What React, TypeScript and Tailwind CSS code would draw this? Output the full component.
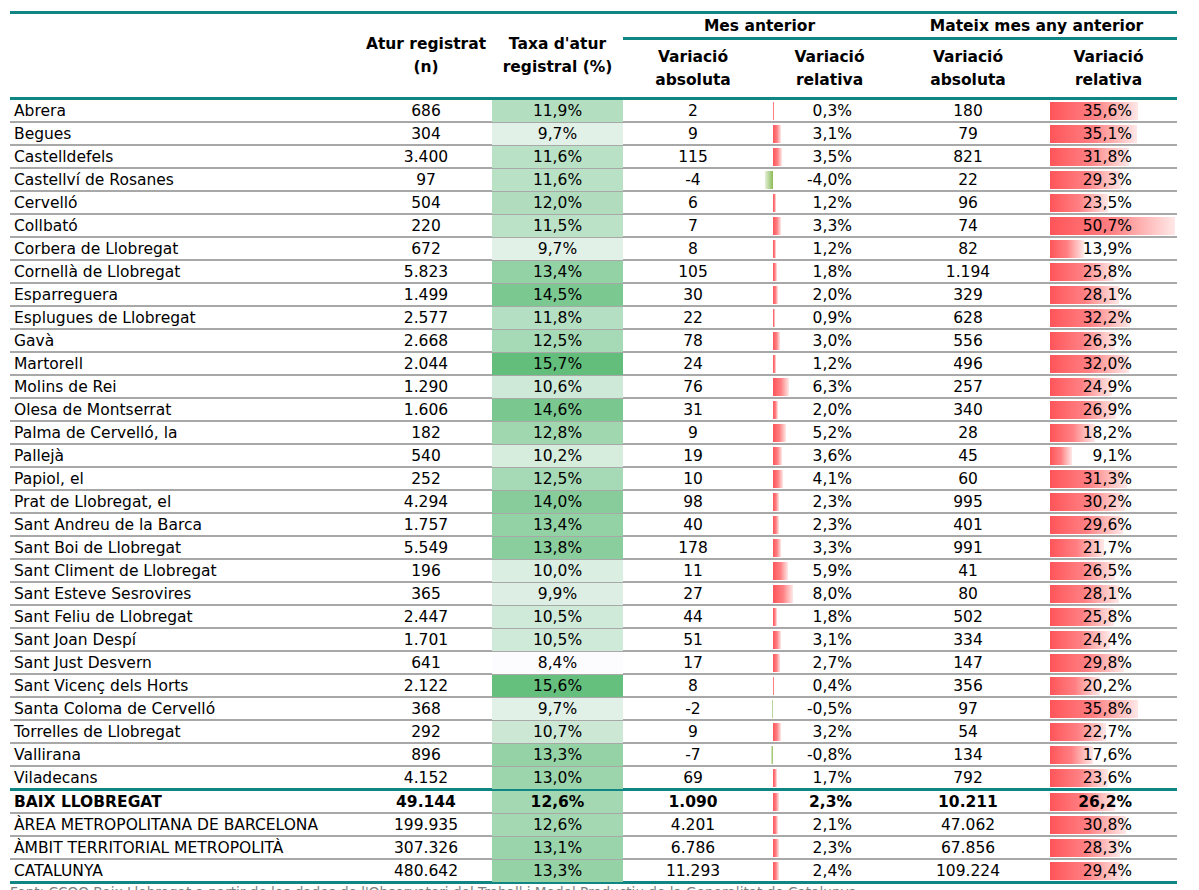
import React from "react";

type Row = [string, string, string, string, string, string, string];

const rows: Row[] = [
  ["Abrera", "686", "11,9%", "2", "0,3%", "180", "35,6%"],
  ["Begues", "304", "9,7%", "9", "3,1%", "79", "35,1%"],
  ["Castelldefels", "3.400", "11,6%", "115", "3,5%", "821", "31,8%"],
  ["Castellví de Rosanes", "97", "11,6%", "-4", "-4,0%", "22", "29,3%"],
  ["Cervelló", "504", "12,0%", "6", "1,2%", "96", "23,5%"],
  ["Collbató", "220", "11,5%", "7", "3,3%", "74", "50,7%"],
  ["Corbera de Llobregat", "672", "9,7%", "8", "1,2%", "82", "13,9%"],
  ["Cornellà de Llobregat", "5.823", "13,4%", "105", "1,8%", "1.194", "25,8%"],
  ["Esparreguera", "1.499", "14,5%", "30", "2,0%", "329", "28,1%"],
  ["Esplugues de Llobregat", "2.577", "11,8%", "22", "0,9%", "628", "32,2%"],
  ["Gavà", "2.668", "12,5%", "78", "3,0%", "556", "26,3%"],
  ["Martorell", "2.044", "15,7%", "24", "1,2%", "496", "32,0%"],
  ["Molins de Rei", "1.290", "10,6%", "76", "6,3%", "257", "24,9%"],
  ["Olesa de Montserrat", "1.606", "14,6%", "31", "2,0%", "340", "26,9%"],
  ["Palma de Cervelló, la", "182", "12,8%", "9", "5,2%", "28", "18,2%"],
  ["Pallejà", "540", "10,2%", "19", "3,6%", "45", "9,1%"],
  ["Papiol, el", "252", "12,5%", "10", "4,1%", "60", "31,3%"],
  ["Prat de Llobregat, el", "4.294", "14,0%", "98", "2,3%", "995", "30,2%"],
  ["Sant Andreu de la Barca", "1.757", "13,4%", "40", "2,3%", "401", "29,6%"],
  ["Sant Boi de Llobregat", "5.549", "13,8%", "178", "3,3%", "991", "21,7%"],
  ["Sant Climent de Llobregat", "196", "10,0%", "11", "5,9%", "41", "26,5%"],
  ["Sant Esteve Sesrovires", "365", "9,9%", "27", "8,0%", "80", "28,1%"],
  ["Sant Feliu de Llobregat", "2.447", "10,5%", "44", "1,8%", "502", "25,8%"],
  ["Sant Joan Despí", "1.701", "10,5%", "51", "3,1%", "334", "24,4%"],
  ["Sant Just Desvern", "641", "8,4%", "17", "2,7%", "147", "29,8%"],
  ["Sant Vicenç dels Horts", "2.122", "15,6%", "8", "0,4%", "356", "20,2%"],
  ["Santa Coloma de Cervelló", "368", "9,7%", "-2", "-0,5%", "97", "35,8%"],
  ["Torrelles de Llobregat", "292", "10,7%", "9", "3,2%", "54", "22,7%"],
  ["Vallirana", "896", "13,3%", "-7", "-0,8%", "134", "17,6%"],
  ["Viladecans", "4.152", "13,0%", "69", "1,7%", "792", "23,6%"],
];

const totals: Row[] = [
  ["BAIX LLOBREGAT", "49.144", "12,6%", "1.090", "2,3%", "10.211", "26,2%"],
  ["ÀREA METROPOLITANA DE BARCELONA", "199.935", "12,6%", "4.201", "2,1%", "47.062", "30,8%"],
  ["ÀMBIT TERRITORIAL METROPOLITÀ", "307.326", "13,1%", "6.786", "2,3%", "67.856", "28,3%"],
  ["CATALUNYA", "480.642", "13,3%", "11.293", "2,4%", "109.224", "29,4%"],
];

const num = (s: string) => parseFloat(s.replace("%", "").replace(",", "."));

function scaleColor(v: number) {
  const t = Math.max(0, Math.min(1, (v - 8.4) / (15.7 - 8.4)));
  const a = [252, 252, 255];
  const b = [99, 190, 123];
  const c = a.map((x, i) => Math.round(x + (b[i] - x) * t));
  return `rgb(${c[0]},${c[1]},${c[2]})`;
}

const GRID = "grid grid-cols-[350px_132px_131px_140px_133px_144px_137px]";

function Bar({ value }: { value: number }) {
  if (value >= 0) {
    const w = Math.max(1, value * 2.47);
    return (
      <div
        className="absolute left-[10px] top-[2px] bottom-[2px] bg-gradient-to-r from-[#ff5459] via-[#ff7f83] to-[#ffe8e8]"
        style={{ width: w }}
      />
    );
  }
  const w = Math.max(1, -value * 2.05);
  return (
    <div
      className="absolute top-[2px] bottom-[2px] bg-gradient-to-l from-[#8cbb55] to-[#e3efd6]"
      style={{ width: w, left: 10 - w }}
    />
  );
}

function DataRow({ r, bold, last }: { r: Row; bold?: boolean; last?: boolean }) {
  return (
    <div
      className={`${GRID} ${
        last ? "h-[24px] border-b-[3px] border-[#0f8683]" : "h-[23px] border-b-2 border-[#a8a8a8]"
      } ${bold ? "font-bold" : ""}`}
    >
      <div className="pl-[4px] leading-[22px] whitespace-nowrap">{r[0]}</div>
      <div className="text-center leading-[22px]">{r[1]}</div>
      <div className="text-center leading-[22px]" style={{ backgroundColor: scaleColor(num(r[2])) }}>
        {r[2]}
      </div>
      <div className="text-center leading-[22px]">{r[3]}</div>
      <div className="relative text-right pr-[44px] leading-[22px]">
        <Bar value={num(r[4])} />
        <span className="relative">{r[4]}</span>
      </div>
      <div className="text-center leading-[22px]">{r[5]}</div>
      <div className="relative text-right pr-[45px] leading-[22px]">
        <Bar value={num(r[6])} />
        <span className="relative">{r[6]}</span>
      </div>
    </div>
  );
}

export default function App() {
  return (
    <div
      className="w-[1199px] h-[890px] overflow-hidden bg-white text-black text-[15.5px] pt-[11px]"
      style={{ fontFamily: '"DejaVu Sans", Verdana, sans-serif' }}
    >
      <div className="ml-[10px] w-[1167px]">
        <div className="h-[3px] bg-[#0f8683]" />
        <div className={`${GRID} grid-rows-[23px_3px_57px] font-bold leading-[23px]`}>
          <div className="row-span-3" />
          <div className="row-span-3 flex flex-col items-center justify-center text-center whitespace-nowrap">
            <span>Atur registrat</span>
            <span>(n)</span>
          </div>
          <div className="row-span-3 flex flex-col items-center justify-center text-center whitespace-nowrap">
            <span>Taxa d'atur</span>
            <span>registral (%)</span>
          </div>
          <div className="col-span-2 text-center pt-[1px]">Mes anterior</div>
          <div className="col-span-2 text-center pt-[1px]">Mateix mes any anterior</div>
          <div className="col-span-4 bg-[#0f8683]" />
          <div className="flex flex-col items-center justify-center">
            <span>Variació</span>
            <span>absoluta</span>
          </div>
          <div className="flex flex-col items-center justify-center">
            <span>Variació</span>
            <span>relativa</span>
          </div>
          <div className="flex flex-col items-center justify-center">
            <span>Variació</span>
            <span>absoluta</span>
          </div>
          <div className="flex flex-col items-center justify-center">
            <span>Variació</span>
            <span>relativa</span>
          </div>
        </div>
        <div className="h-[3px] bg-[#0f8683]" />
        {rows.map((r, i) => (
          <DataRow key={r[0]} r={r} last={i === rows.length - 1} />
        ))}
        {totals.map((r, i) => (
          <DataRow key={r[0]} r={r} bold={i === 0} last={i === totals.length - 1} />
        ))}
        <div className="text-[#7f7f7f] text-[13.6px] leading-[16px] whitespace-nowrap">
          Font: CCOO Baix Llobregat a partir de les dades de l'Observatori del Treball i Model Productiu de la Generalitat de Catalunya
        </div>
      </div>
    </div>
  );
}
